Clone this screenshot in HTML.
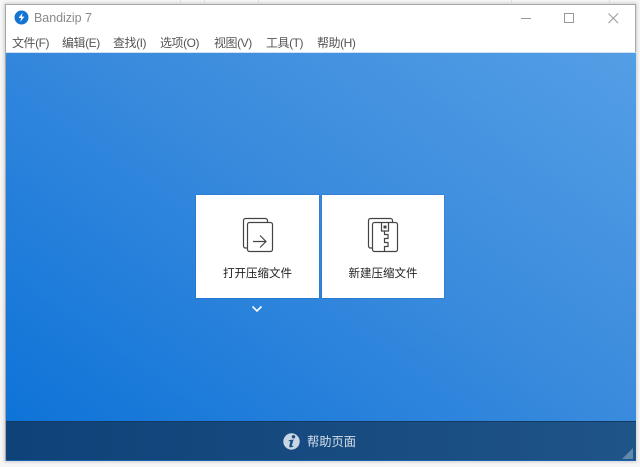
<!DOCTYPE html>
<html><head><meta charset="utf-8">
<style>
html,body{margin:0;padding:0;width:640px;height:467px;overflow:hidden;background:#f6f6f6;font-family:"Liberation Sans","Noto Sans CJK SC",sans-serif}
.abs{position:absolute}
#win{left:5px;top:4px;width:631px;height:457px;background:#fff;box-shadow:0 0 3px 1px rgba(0,0,0,.16);border:1px solid #a8a8a8;border-bottom:0;box-sizing:border-box}
#main{left:6px;top:53px;width:630px;height:369px;background:linear-gradient(215deg,#549ee5 0%,#3a8bdd 45%,#0e73d8 100%)}
#foot{left:6px;top:421px;width:630px;height:40px;background:linear-gradient(90deg,#0e4278,#1f5488);border-top:1px solid #123a63;border-bottom:1px solid #1a62ad;box-sizing:border-box}
.m{top:36px;font-size:12px;line-height:14px;color:#555;white-space:nowrap;letter-spacing:-.45px;filter:blur(.25px)}
.card{top:195px;height:103px;background:#fff;box-shadow:0 0 1px rgba(10,50,110,.6)}
.lab{top:267px;font-size:11.500px;line-height:14px;color:#222;white-space:nowrap;text-align:center;filter:blur(.2px)}
</style></head><body>
<div class="abs" id="win"></div>
<div class="abs" style="left:180px;top:0;width:1px;height:3px;background:#ddd"></div>
<div class="abs" style="left:204px;top:0;width:1px;height:3px;background:#ddd"></div>
<div class="abs" style="left:258px;top:0;width:1px;height:3px;background:#ddd"></div>
<div class="abs" style="left:511px;top:0;width:1px;height:3px;background:#ddd"></div>
<div class="abs" style="left:609px;top:0;width:1px;height:3px;background:#ddd"></div>
<svg class="abs" style="left:14px;top:10px" width="15" height="15" viewBox="0 0 15 15"><circle cx="7.500" cy="7.500" r="7" fill="#1474d4"/><path d="M8.500 2.800 4.600 8h2.600L6.200 12l4.200-5.400H7.800z" fill="#fff"/></svg>
<div class="abs" style="left:34px;top:11px;font-size:12.500px;line-height:15px;color:#8a8a8a;letter-spacing:-.05px">Bandizip 7</div>
<svg class="abs" style="left:510px;top:8px" width="120" height="20" viewBox="0 0 120 20" fill="none" stroke="#999" stroke-width="1"><path d="M11 10.500h10"/><rect x="54.500" y="5.500" width="9" height="9"/><path d="M98.500 5.500l9.500 9.500M108 5.500l-9.500 9.500"/></svg>
<div class="abs m" style="left:12px">文件(F)</div>
<div class="abs m" style="left:62px">编辑(E)</div>
<div class="abs m" style="left:113px">查找(I)</div>
<div class="abs m" style="left:160px">选项(O)</div>
<div class="abs m" style="left:214px">视图(V)</div>
<div class="abs m" style="left:266px">工具(T)</div>
<div class="abs m" style="left:317px">帮助(H)</div>
<div class="abs" id="main"></div>
<div class="abs" style="left:6px;top:52px;width:630px;height:1px;background:#cfe0f2"></div>
<div class="abs card" style="left:196px;width:123px"></div>
<div class="abs card" style="left:322px;width:122px"></div>
<svg class="abs" style="left:242px;top:217px" width="32" height="36" viewBox="0 0 32 36" fill="none" stroke="#444" stroke-width="1.200"><path d="M5.500 31H3.500a2 2 0 0 1-2-2V3.500a2 2 0 0 1 2-2h20a2 2 0 0 1 2 2v2"/><rect x="5.500" y="5.500" width="25" height="29" rx="2" fill="#fff"/><path d="M11 24.500h13M18 18.500l6 6-6 6"/></svg>
<svg class="abs" style="left:367px;top:217px" width="32" height="36" viewBox="0 0 32 36" fill="none" stroke="#444" stroke-width="1.200"><path d="M5.500 31H3.500a2 2 0 0 1-2-2V3.500a2 2 0 0 1 2-2h20a2 2 0 0 1 2 2v2"/><rect x="5.500" y="5.500" width="25" height="29" rx="2" fill="#fff"/><path d="M14.500 5.500V14H21.500V5.500M17.500 14v3.500h3.500v4h-3.500v4h3.500v4h-3.500v5"/><rect x="16.500" y="8.500" width="3" height="3" fill="#444" stroke="none"/></svg>
<div class="abs lab" style="left:196px;width:123px">打开压缩文件</div>
<div class="abs lab" style="left:322px;width:122px">新建压缩文件</div>
<svg class="abs" style="left:251px;top:305px" width="12" height="8" viewBox="0 0 12 8" fill="none" stroke="#fff" stroke-width="1.600"><path d="M1.500 1.500 6 6l4.500-4.500"/></svg>
<div class="abs" id="foot"></div>
<svg class="abs" style="left:283px;top:433px" width="17" height="17" viewBox="0 0 17 17"><circle cx="8.500" cy="8.500" r="8.200" fill="#c9d6e3"/><circle cx="10.500" cy="3.800" r="1.700" fill="#1a4d80"/><path d="M5.800 7.300 10.600 6.500 8.800 12.600c-.1.500.3.600 1.600-.1l-.1 1c-2.200 1.300-4.400 1.300-4-.7l1.100-4.600-1.700.1z" fill="#1a4d80"/></svg>
<div class="abs" style="left:307px;top:435px;font-size:12.250px;line-height:14px;color:#d5dfe9;white-space:nowrap">帮助页面</div>
<svg class="abs" style="left:622px;top:448px" width="11" height="11" viewBox="0 0 11 11"><path d="M11 0v11H0z" fill="#7d9dbd" opacity=".7"/></svg>
</body></html>
